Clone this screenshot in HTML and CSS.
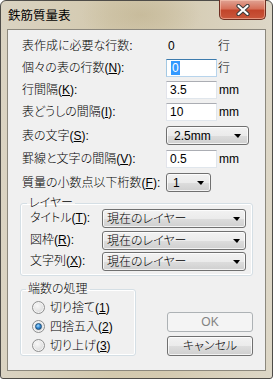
FILE: index.html
```html
<!DOCTYPE html>
<html lang="ja">
<head>
<meta charset="utf-8">
<title>鉄筋質量表</title>
<link rel="stylesheet" href="styles.css">
</head>
<body>
<div class="window">
  <div class="titlebar">
    <span class="title">鉄筋質量表</span>
    <div class="close">
      <svg width="14" height="12" viewBox="0 0 14 12">
        <path d="M2.5 2 L11.5 10 M11.5 2 L2.5 10" stroke="#3b3b3b" stroke-width="4.2" stroke-linecap="round"/>
        <path d="M2.5 2 L11.5 10 M11.5 2 L2.5 10" stroke="#ffffff" stroke-width="2.2" stroke-linecap="round"/>
      </svg>
    </div>
  </div>
  <div class="client">
    <div class="rows">
      <div class="row">
        <span class="lbl">表作成に必要な行数:</span>
        <span class="val">0</span>
        <span class="unit">行</span>
      </div>
      <div class="row">
        <span class="lbl">個々の表の行数(<u>N</u>):</span>
        <div class="edit focus"><span class="sel">0</span></div>
        <span class="unit">行</span>
      </div>
      <div class="row">
        <span class="lbl">行間隔(<u>K</u>):</span>
        <div class="edit">3.5</div>
        <span class="unit mm">mm</span>
      </div>
      <div class="row">
        <span class="lbl">表どうしの間隔(<u>I</u>):</span>
        <div class="edit">10</div>
        <span class="unit mm">mm</span>
      </div>
      <div class="row tall">
        <span class="lbl">表の文字(<u>S</u>):</span>
        <div class="combo wide"><span>2.5mm</span><i class="arrow"></i></div>
      </div>
      <div class="row">
        <span class="lbl">罫線と文字の間隔(<u>V</u>):</span>
        <div class="edit">0.5</div>
        <span class="unit mm">mm</span>
      </div>
      <div class="row tall">
        <span class="lbl">質量の小数点以下桁数(<u>F</u>):</span>
        <div class="combo narrow"><span>1</span><i class="arrow"></i></div>
      </div>
    </div>

    <fieldset class="group layer">
      <legend>レイヤー</legend>
      <div class="lrow r1">
        <span class="llbl">タイトル(<u>T</u>):</span>
        <div class="combo layercombo"><span>現在のレイヤー</span><i class="arrow"></i></div>
      </div>
      <div class="lrow r2">
        <span class="llbl">図枠(<u>R</u>):</span>
        <div class="combo layercombo"><span>現在のレイヤー</span><i class="arrow"></i></div>
      </div>
      <div class="lrow r3">
        <span class="llbl">文字列(<u>X</u>):</span>
        <div class="combo layercombo"><span>現在のレイヤー</span><i class="arrow"></i></div>
      </div>
    </fieldset>

    <div class="bottom">
      <fieldset class="group rounding">
        <legend>端数の処理</legend>
        <div class="radio"><span class="dot"></span><span>切り捨て(<u>1</u>)</span></div>
        <div class="radio"><span class="dot on"></span><span>四捨五入(<u>2</u>)</span></div>
        <div class="radio"><span class="dot"></span><span>切り上げ(<u>3</u>)</span></div>
      </fieldset>
      <div class="buttons">
        <div class="btn disabled">OK</div>
        <div class="btn">キャンセル</div>
      </div>
    </div>
  </div>
</div>
</body>
</html>
```
FILE: styles.css
```css
html, body {
  margin: 0;
  padding: 0;
  background: #ffffff;
}

body {
  font-family: "Liberation Sans", "Noto Sans CJK JP", sans-serif;
  font-size: 12px;
  font-weight: 300;
  line-height: 14px;
  color: #000;
  font-feature-settings: "palt";
}

u {
  text-decoration: underline;
  text-underline-offset: 1px;
}

.window {
  width: 273px;
  height: 379px;
  box-sizing: border-box;
  border: 1px solid #4e4c48;
  border-radius: 6px 6px 3px 3px;
  padding: 0 6px 7px;
  display: flex;
  flex-direction: column;
  background:
    radial-gradient(ellipse 60px 30px at 140px 14px, rgba(190, 176, 140, 0.55), rgba(190, 176, 140, 0) 100%),
    linear-gradient(to right, #dad3c2 0%, #d3c9ae 40%, #d4cab0 60%, #ddd7c7 100%);
}

.titlebar {
  height: 28px;
  display: flex;
  justify-content: space-between;
  align-items: flex-start;
}

.title {
  padding: 7px 0 0 1px;
  font-family: "Noto Sans CJK JP", sans-serif;
  font-weight: 400;
  font-size: 12.5px;
  line-height: 14px;
  color: #000;
  font-feature-settings: normal;
}

.close {
  margin-top: -1px;
  width: 47px;
  height: 20px;
  box-sizing: border-box;
  border: 1px solid #6e2f22;
  border-top: none;
  border-radius: 0 0 5px 5px;
  background: linear-gradient(#e0a394 0%, #d6715a 45%, #c2452b 55%, #c9573c 100%);
  box-shadow: inset 0 0 0 1px rgba(255, 210, 190, 0.5);
  display: flex;
  align-items: center;
  justify-content: center;
}

.close svg {
  display: block;
}

.client {
  flex: 1;
  border: 1px solid #8c887d;
  background: #f0f0f0;
  padding: 5px 11px 0 12px;
}

.rows {
  padding-left: 2px;
  display: flex;
  flex-direction: column;
}

.row {
  height: 22px;
  display: flex;
  align-items: center;
}

.row.tall {
  height: 25px;
}

.lbl {
  width: 144px;
  flex: none;
  white-space: nowrap;
}

.val {
  width: 49px;
  padding-left: 2px;
}

.unit {
  margin-left: 1px;
}

.unit.mm {
  margin-left: 2px;
}

.edit {
  width: 51px;
  height: 18px;
  box-sizing: border-box;
  background: #fff;
  border: 1px solid #e0e6ec;
  border-top-color: #abadb3;
  border-left-color: #e2e3ea;
  padding: 1px 3px;
  line-height: 14px;
}

.edit.focus {
  border-color: #b7d4ec;
  border-top-color: #3d7bad;
  border-left-color: #a4c9e3;
  padding-left: 4px;
}

.sel {
  background: #3399ff;
  color: #fff;
  display: inline-block;
  padding: 0 1px;
}

.combo {
  height: 19px;
  box-sizing: border-box;
  border: 1px solid #707070;
  border-radius: 3px;
  background: linear-gradient(#f2f2f2 0%, #ebebeb 50%, #dddddd 51%, #cfcfcf 100%);
  box-shadow: inset 0 0 0 1px rgba(255, 255, 255, 0.75);
  display: flex;
  align-items: center;
  justify-content: space-between;
  padding: 0 7px 0 7px;
}

.combo.wide {
  width: 83px;
}

.combo.narrow {
  width: 45px;
  padding-left: 6px;
  padding-right: 6px;
}

.combo.layercombo {
  width: 144px;
  padding-left: 4px;
  padding-right: 5px;
}

.arrow {
  width: 0;
  height: 0;
  border-left: 4px solid transparent;
  border-right: 3px solid transparent;
  border-top: 4px solid #000;
  margin-top: 1px;
}

.group {
  margin: 0;
  border: 1px solid #d5dfe5;
  border-radius: 3px;
  box-shadow: inset 0 0 0 1px #ffffff;
  min-width: 0;
}

.group legend {
  padding: 0 2px;
  line-height: 12px;
  font-size: 12px;
}

.layer {
  margin-top: 2px;
  width: 233px;
  box-sizing: border-box;
  padding: 0 6px 4px 9px;
}

.layer legend {
  margin-left: -3px;
}

.lrow {
  display: flex;
  align-items: flex-start;
}

.lrow.r1 { height: 22px; }
.lrow.r2 { height: 21px; }
.lrow.r3 { height: 19px; }

.llbl {
  width: 72px;
  flex: none;
  line-height: 19px;
  white-space: nowrap;
}

.bottom {
  margin-top: 7px;
  display: flex;
  align-items: flex-end;
  justify-content: space-between;
}

.rounding {
  width: 116px;
  box-sizing: border-box;
  padding: 3px 0 0 11px;
}

.rounding legend {
  margin-left: -6px;
}

.radio {
  height: 19px;
  display: flex;
  align-items: center;
  gap: 5px;
}

.dot {
  width: 13px;
  height: 13px;
  box-sizing: border-box;
  border-radius: 50%;
  border: 1px solid #8e8f8f;
  background: radial-gradient(circle at 40% 35%, #f8f8f8 0%, #e0e0e0 60%, #cfcfcf 100%);
  box-shadow: inset 0 0 0 1px #f4f4f4;
  position: relative;
  flex: none;
}

.dot.on::after {
  content: "";
  position: absolute;
  left: 2px;
  top: 2px;
  width: 7px;
  height: 7px;
  box-sizing: border-box;
  border-radius: 50%;
  border: 1px solid #1c4f7a;
  background: radial-gradient(circle at 40% 35%, #a6dcff 0%, #3a8fd8 45%, #174f8c 100%);
}

.buttons {
  width: 86px;
  margin-right: 1px;
  display: flex;
  flex-direction: column;
  gap: 4px;
}

.btn {
  height: 20px;
  box-sizing: border-box;
  border: 1px solid #707070;
  border-radius: 3px;
  background: linear-gradient(#f2f2f2 0%, #ebebeb 50%, #dddddd 51%, #cfcfcf 100%);
  box-shadow: inset 0 0 0 1px rgba(255, 255, 255, 0.75);
  display: flex;
  align-items: center;
  justify-content: center;
}

.btn.disabled {
  border-color: #adb2b5;
  background: #f4f4f4;
  box-shadow: none;
  color: #838383;
}
```
